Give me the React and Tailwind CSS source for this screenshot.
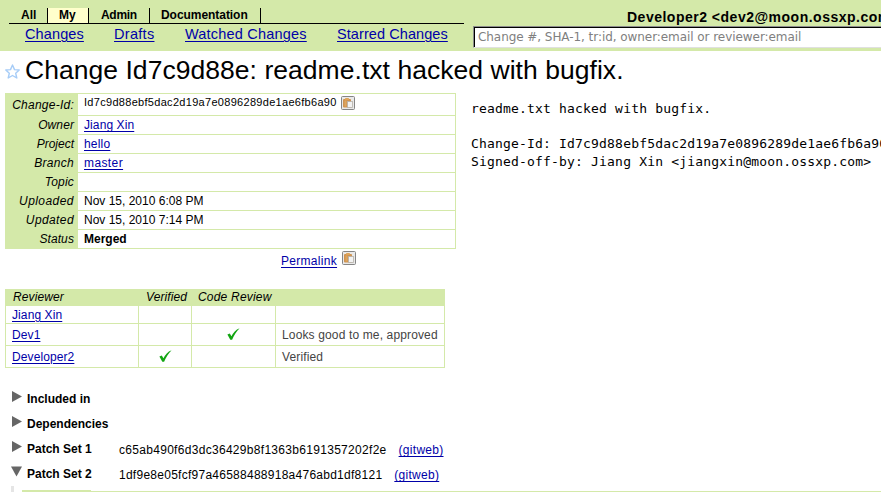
import React from 'react';

const link = 'text-[#0000a8] underline underline-offset-2 decoration-1 cursor-pointer';

function CopyIcon() {
  return (
    <svg width="14" height="14" viewBox="0 0 14 14" className="block shrink-0">
      <rect x="0.5" y="0.5" width="13" height="13" rx="1" fill="#e9e9e9" stroke="#858585" />
      <rect x="2" y="3" width="8" height="8.5" rx="1" fill="#cf9350" />
      <rect x="4" y="2" width="4" height="2" rx="0.8" fill="#dfa55c" />
      <path d="M3.5 4.5h2v6h-2z" fill="#dda55f" />
      <rect x="6.5" y="5.5" width="5" height="6" fill="#f2f2f2" stroke="#b5b0a8" strokeWidth="0.8" />
    </svg>
  );
}

function Check() {
  return (
    <svg width="13" height="13" viewBox="0 0 13 13" className="block">
      <path d="M0.4 6.6L2.8 5.6L4.4 8.2C6.2 4.6 8.8 1.6 12.6 0.2C9.4 3.4 7.1 7 5.1 11.8H3.3Z" fill="#12a512" />
    </svg>
  );
}

function Triangle({ open }) {
  return (
    <svg width="12" height="12" viewBox="0 0 12 12" className="mt-px block shrink-0">
      <path d={open ? 'M0 0.5H11L5.5 10.5Z' : 'M1 0L11 5.5L1 11Z'} fill="#666" />
    </svg>
  );
}

const info = [
  ['Owner', 'Jiang Xin', link, 'tracking-[0.1px]', 'tracking-[0.1px]'],
  ['Project', 'hello', link, 'tracking-[0px]', 'tracking-[0.2px]'],
  ['Branch', 'master', link, 'tracking-[0.3px]', 'tracking-[0.4px]'],
  ['Topic', '', '', 'tracking-[0.2px]', ''],
  ['Uploaded', 'Nov 15, 2010 6:08 PM', '', 'tracking-[0.45px]', ''],
  ['Updated', 'Nov 15, 2010 7:14 PM', '', 'tracking-[0.4px]', ''],
  ['Status', 'Merged', 'font-bold', 'tracking-[0.1px]', ''],
];

const reviewers = [
  { name: 'Jiang Xin', h: 'h-[18px]', verified: false, review: false, note: '' },
  { name: 'Dev1', h: 'h-[22px]', verified: false, review: true, note: 'Looks good to me, approved' },
  { name: 'Developer2', h: 'h-[22px]', verified: true, review: false, note: 'Verified' },
];

function Header() {
  return (
    <header className="flex h-[51px] w-[881px] overflow-hidden bg-[#d4e9a9]">
      <div className="ml-[9px] w-[455px] shrink-0 pt-2">
        <div className="flex h-4 border-b border-black text-[12px] leading-[14px] font-bold">
          <div className="w-[39px] border-r border-black pl-3">All</div>
          <div className="w-[41px] border-r border-black bg-[#ffffcc] pl-[11px]">My</div>
          <div className="w-[61px] border-r border-black pl-3 tracking-[-0.3px]">Admin</div>
          <div className="w-[111px] border-r border-black pl-[11px] tracking-[-0.05px]">Documentation</div>
        </div>
        <nav className="flex pl-4 text-[14.5px] leading-5 whitespace-nowrap">
          <a className={`${link} w-[59px] mr-[30px] tracking-[0.12px]`}>Changes</a>
          <a className={`${link} w-[40px] mr-[31px] tracking-[0.3px]`}>Drafts</a>
          <a className={`${link} w-[122px] mr-[30px] tracking-[0.2px]`}>Watched Changes</a>
          <a className={`${link} tracking-[0.08px]`}>Starred Changes</a>
        </nav>
      </div>
      <div className="ml-[9px] w-[408px] shrink-0 overflow-hidden pt-2">
        <div className="h-[18px] pl-[154px] text-[14px] leading-[18px] font-bold tracking-[0.5px] whitespace-nowrap">
          Developer2 &lt;dev2@moon.ossxp.com&gt;
        </div>
        <div className="h-[22px] w-[420px] border border-[#8c8c8c] border-b-[#e0e0e0] bg-white">
          <div className="h-5 border-t border-l border-black pl-[3px] font-['DejaVu_Sans',sans-serif] text-[12px] leading-[18px] tracking-[-0.06px] whitespace-nowrap text-[#808080]">
            Change #, SHA-1, tr:id, owner:email or reviewer:email
          </div>
        </div>
      </div>
    </header>
  );
}

function InfoTable() {
  return (
    <div className="w-[451px] shrink-0 border border-[#d4e9a9]">
      <div className="flex h-[21px]">
        <div className="w-[72px] bg-[#d4e9a9] pr-[4px] text-right leading-[22px] tracking-[0.25px] italic">Change-Id:</div>
        <div className="flex grow items-start pt-[2px] pl-[6px]">
          <span className="text-[11px] leading-[13px] tracking-[0.3px]">Id7c9d88ebf5dac2d19a7e0896289de1ae6fb6a90</span>
          <span className="ml-[4px]"><CopyIcon /></span>
        </div>
      </div>
      {info.map(([k, v, c, labelTrack, valueTrack]) => (
        <div key={k} className="flex h-[19px] leading-[18px]">
          <div className={`w-[72px] bg-[#d4e9a9] pr-[4px] pt-px text-right italic ${labelTrack}`}>{k}</div>
          <div className={`grow border-t border-[#d4e9a9] pl-[6px] ${valueTrack}`}>
            <span className={c}>{v}</span>
          </div>
        </div>
      ))}
    </div>
  );
}

function ReviewTable() {
  return (
    <div className="w-[440px] border-x border-[#d4e9a9]">
      <div className="flex h-[17px] bg-[#d4e9a9] leading-[17px] italic">
        <span className="w-[133px] pl-[7px] tracking-[0.1px]">Reviewer</span>
        <span className="w-[53px] pl-[7px] tracking-[0.1px]">Verified</span>
        <span className="pl-[6px] tracking-[0.2px]">Code Review</span>
      </div>
      {reviewers.map((r) => (
        <div key={r.name} className={`flex items-stretch border-b border-[#d4e9a9] ${r.h}`}>
          <div className="flex w-[133px] items-center border-r border-[#d4e9a9] pl-[6px] tracking-[0.1px]">
            <a className={link}>{r.name}</a>
          </div>
          <div className="flex w-[53px] items-center justify-center border-r border-[#d4e9a9]">{r.verified && <Check />}</div>
          <div className="flex w-[84px] items-center justify-center border-r border-[#d4e9a9]">{r.review && <Check />}</div>
          <div className="flex items-center pl-[6px] tracking-[0.14px] whitespace-nowrap text-[#444]">{r.note}</div>
        </div>
      ))}
    </div>
  );
}

function Section({ label, open, hash, hashClass }) {
  return (
    <div className="flex h-[25px] items-start">
      <Triangle open={open} />
      <div className="ml-[4px] w-[92px] pt-[1px] leading-4 font-bold">{label}</div>
      {hash && (
        <div className="flex pt-[2px] leading-4 whitespace-nowrap">
          <span className={hashClass}>{hash}</span>
          <a className={`${link} tracking-[0.28px]`}>(gitweb)</a>
        </div>
      )}
    </div>
  );
}

export default function App() {
  return (
    <div className="h-[492px] w-[881px] overflow-hidden bg-white font-['Liberation_Sans',Arial,sans-serif] text-[12px] text-black">
      <Header />
      <div className="flex h-[42px] pl-[5px]">
        <svg width="15" height="15" viewBox="0 0 15 15" className="mt-[13px]">
          <path d="M7.5 1L9.5 5.6L14.2 6L10.7 9.3L11.8 14L7.5 11.5L3.2 14L4.3 9.3L.8 6L5.5 5.6Z" fill="#fff" stroke="#a6ccf7" strokeWidth="1.4" strokeLinejoin="round" />
        </svg>
        <h1 className="ml-[5px] pt-[2px] text-[26.5px] leading-[34px] tracking-[0.04px] whitespace-nowrap">Change Id7c9d88e: readme.txt hacked with bugfix.</h1>
      </div>
      <div className="flex h-[156px] pl-[5px]">
        <InfoTable />
        <pre className="ml-[15px] pt-[7px] font-['DejaVu_Sans_Mono',monospace] text-[13px] leading-[17.5px] tracking-[0.18px]">
          {'readme.txt hacked with bugfix.\n\nChange-Id: Id7c9d88ebf5dac2d19a7e0896289de1ae6fb6a90\nSigned-off-by: Jiang Xin <jiangxin@moon.ossxp.com>'}
        </pre>
      </div>
      <div className="flex h-10 pt-[2px] pl-[281px]">
        <a className={`${link} w-[56px] pt-[2px] leading-4 tracking-[0.3px]`}>Permalink</a>
        <span className="ml-[5px]"><CopyIcon /></span>
      </div>
      <div className="h-[101px] pl-[5px]">
        <ReviewTable />
      </div>
      <div className="h-[96px] pl-[11px]">
        <Section label="Included in" />
        <Section label="Dependencies" />
        <Section label="Patch Set 1" hash="c65ab490f6d3dc36429b8f1363b6191357202f2e" hashClass="mr-[12px] tracking-[0.3px]" />
        <Section label="Patch Set 2" open hash="1df9e8e05fcf97a46588488918a476abd1df8121" hashClass="mr-[12px] tracking-[0.26px]" />
      </div>
      <div className="flex h-[6px] pl-[11px]">
        <div className="w-[3px] bg-[#e5e5e5]" />
        <div className="ml-2 flex grow items-end">
          <div className="h-[2px] w-[69px] bg-[#d4e9a9]" />
          <div className="h-px grow bg-[#d4e9a9]" />
        </div>
      </div>
    </div>
  );
}
